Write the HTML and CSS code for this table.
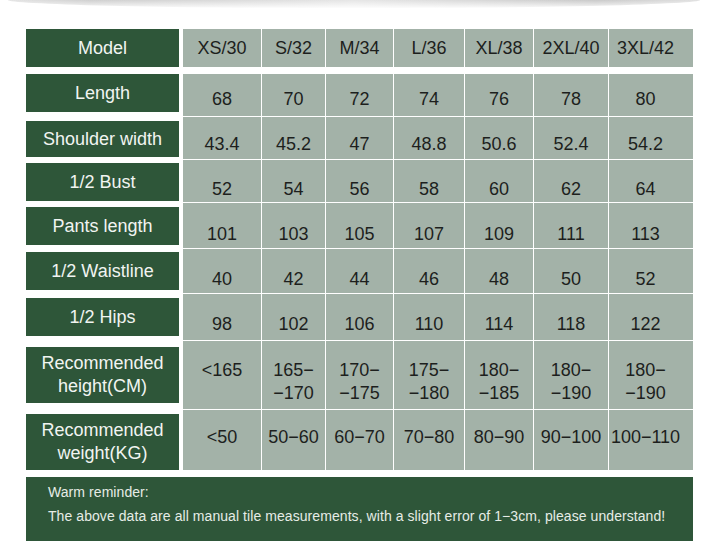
FILE: index.html
```html
<!DOCTYPE html>
<html lang="en">
<head>
<meta charset="utf-8">
<title>Size chart</title>
<link rel="stylesheet" href="styles.css">
</head>
<body>
<div class="page">
  <div class="shade"></div>
  <div class="chart">
    <div class="row row-head">
      <div class="label">Model</div>
      <div class="cell">XS/30</div>
      <div class="cell">S/32</div>
      <div class="cell">M/34</div>
      <div class="cell">L/36</div>
      <div class="cell">XL/38</div>
      <div class="cell">2XL/40</div>
      <div class="cell">3XL/42</div>
    </div>
    <div class="row row-length">
      <div class="label">Length</div>
      <div class="cell">68</div>
      <div class="cell">70</div>
      <div class="cell">72</div>
      <div class="cell">74</div>
      <div class="cell">76</div>
      <div class="cell">78</div>
      <div class="cell">80</div>
    </div>
    <div class="row row-shoulder">
      <div class="label">Shoulder width</div>
      <div class="cell">43.4</div>
      <div class="cell">45.2</div>
      <div class="cell">47</div>
      <div class="cell">48.8</div>
      <div class="cell">50.6</div>
      <div class="cell">52.4</div>
      <div class="cell">54.2</div>
    </div>
    <div class="row row-bust">
      <div class="label">1/2 Bust</div>
      <div class="cell">52</div>
      <div class="cell">54</div>
      <div class="cell">56</div>
      <div class="cell">58</div>
      <div class="cell">60</div>
      <div class="cell">62</div>
      <div class="cell">64</div>
    </div>
    <div class="row row-pants">
      <div class="label">Pants length</div>
      <div class="cell">101</div>
      <div class="cell">103</div>
      <div class="cell">105</div>
      <div class="cell">107</div>
      <div class="cell">109</div>
      <div class="cell">111</div>
      <div class="cell">113</div>
    </div>
    <div class="row row-waist">
      <div class="label">1/2 Waistline</div>
      <div class="cell">40</div>
      <div class="cell">42</div>
      <div class="cell">44</div>
      <div class="cell">46</div>
      <div class="cell">48</div>
      <div class="cell">50</div>
      <div class="cell">52</div>
    </div>
    <div class="row row-hips">
      <div class="label">1/2 Hips</div>
      <div class="cell">98</div>
      <div class="cell">102</div>
      <div class="cell">106</div>
      <div class="cell">110</div>
      <div class="cell">114</div>
      <div class="cell">118</div>
      <div class="cell">122</div>
    </div>
    <div class="row row-height">
      <div class="label">Recommended<br>height(CM)</div>
      <div class="cell">&lt;165</div>
      <div class="cell">165−<br>−170</div>
      <div class="cell">170−<br>−175</div>
      <div class="cell">175−<br>−180</div>
      <div class="cell">180−<br>−185</div>
      <div class="cell">180−<br>−190</div>
      <div class="cell">180−<br>−190</div>
    </div>
    <div class="row row-weight">
      <div class="label">Recommended<br>weight(KG)</div>
      <div class="cell">&lt;50</div>
      <div class="cell">50−60</div>
      <div class="cell">60−70</div>
      <div class="cell">70−80</div>
      <div class="cell">80−90</div>
      <div class="cell">90−100</div>
      <div class="cell">100−110</div>
    </div>
  </div>
  <div class="note">
    <p>Warm reminder:</p>
    <p>The above data are all manual tile measurements, with a slight error of 1−3cm, please understand!</p>
  </div>
</div>
</body>
</html>
```

FILE: styles.css
```css
html, body {
  margin: 0;
  padding: 0;
  background: #ffffff;
}

body {
  font-family: "Liberation Sans", Arial, "Helvetica", sans-serif;
}

.page {
  width: 704px;
  height: 545px;
  overflow: hidden;
  background: #ffffff;
}

.shade {
  height: 8px;
  margin: 0 4px 0 8px;
  border-radius: 0 0 50% 50% / 0 0 100% 100%;
  background:
    linear-gradient(to bottom, rgba(255,255,255,0) 0%, rgba(255,255,255,0.9) 100%),
    linear-gradient(to right, #e4e4e4 0%, #cfcfcf 12%, #dcdcdc 35%, #e6e6e6 50%, #d6d6d6 70%, #c9c9c9 85%, #e0e0e0 100%);
}

.chart {
  margin: 21px 0 0 26px;
  width: 667px;
}

.row {
  display: grid;
  grid-template-columns: 156px 78px 63px 67px 70px 68px 74px 84px;
  column-gap: 1px;
  background: #ffffff;
}

.row + .row {
  margin-top: 1px;
}

.label {
  background: #2e5639;
  color: #f1f4f1;
  margin: 4px 3px 3px 0;
  display: flex;
  align-items: center;
  justify-content: center;
  text-align: center;
  font-size: 18px;
  line-height: 23px;
}

.cell {
  background: #a3b2a8;
  color: #1d1f1d;
  font-size: 18px;
  line-height: 23px;
  display: flex;
  align-items: flex-end;
  justify-content: center;
  text-align: center;
  padding-bottom: 2px;
}

.cell:last-child {
  padding-right: 11px;
}

/* header row */
.row-head {
  height: 38px;
  margin-bottom: 7px;
}

.row-head .label {
  margin: 0 3px 0 0;
}

.row-head .cell {
  align-items: center;
  padding-bottom: 0;
}

/* data rows */
.row-length { height: 42px; }
.row-length .label { margin-top: 0; margin-bottom: 4px; }
.row-length .cell { padding-bottom: 5px; }

.row-shoulder { height: 42px; }
.row-shoulder .label { margin-bottom: 2px; }
.row-shoulder .cell { padding-bottom: 3px; }

.row-bust { height: 42px; }
.row-bust .label { margin-top: 3px; margin-bottom: 1px; }
.row-bust .cell { padding-bottom: 1px; }

.row-pants { height: 45px; }
.row-pants .cell { padding-bottom: 2px; }

.row-waist { height: 44px; }
.row-waist .label { margin-top: 3px; }
.row-waist .cell { padding-bottom: 2px; }

.row-hips { height: 46px; }
.row-hips .label { margin-bottom: 4px; }
.row-hips .cell { padding-bottom: 4px; }

.row-height { height: 68px; }
.row-height .label { margin-top: 6px; margin-bottom: 6px; }
.row-height .cell {
  align-items: flex-start;
  padding-top: 18px;
  padding-bottom: 0;
}

.row-weight { height: 60px; }
.row-weight .label { margin-top: 4px; margin-bottom: 0; }
.row-weight .cell { padding-bottom: 21px; }

/* note */
.note {
  margin: 7px 0 0 26px;
  width: 667px;
  height: 64px;
  box-sizing: border-box;
  padding: 3px 0 0 22px;
  background: #2e5639;
  color: #e6ece6;
  font-size: 14px;
  line-height: 24px;
  letter-spacing: 0.07px;
}

.note p {
  margin: 0;
}
```
